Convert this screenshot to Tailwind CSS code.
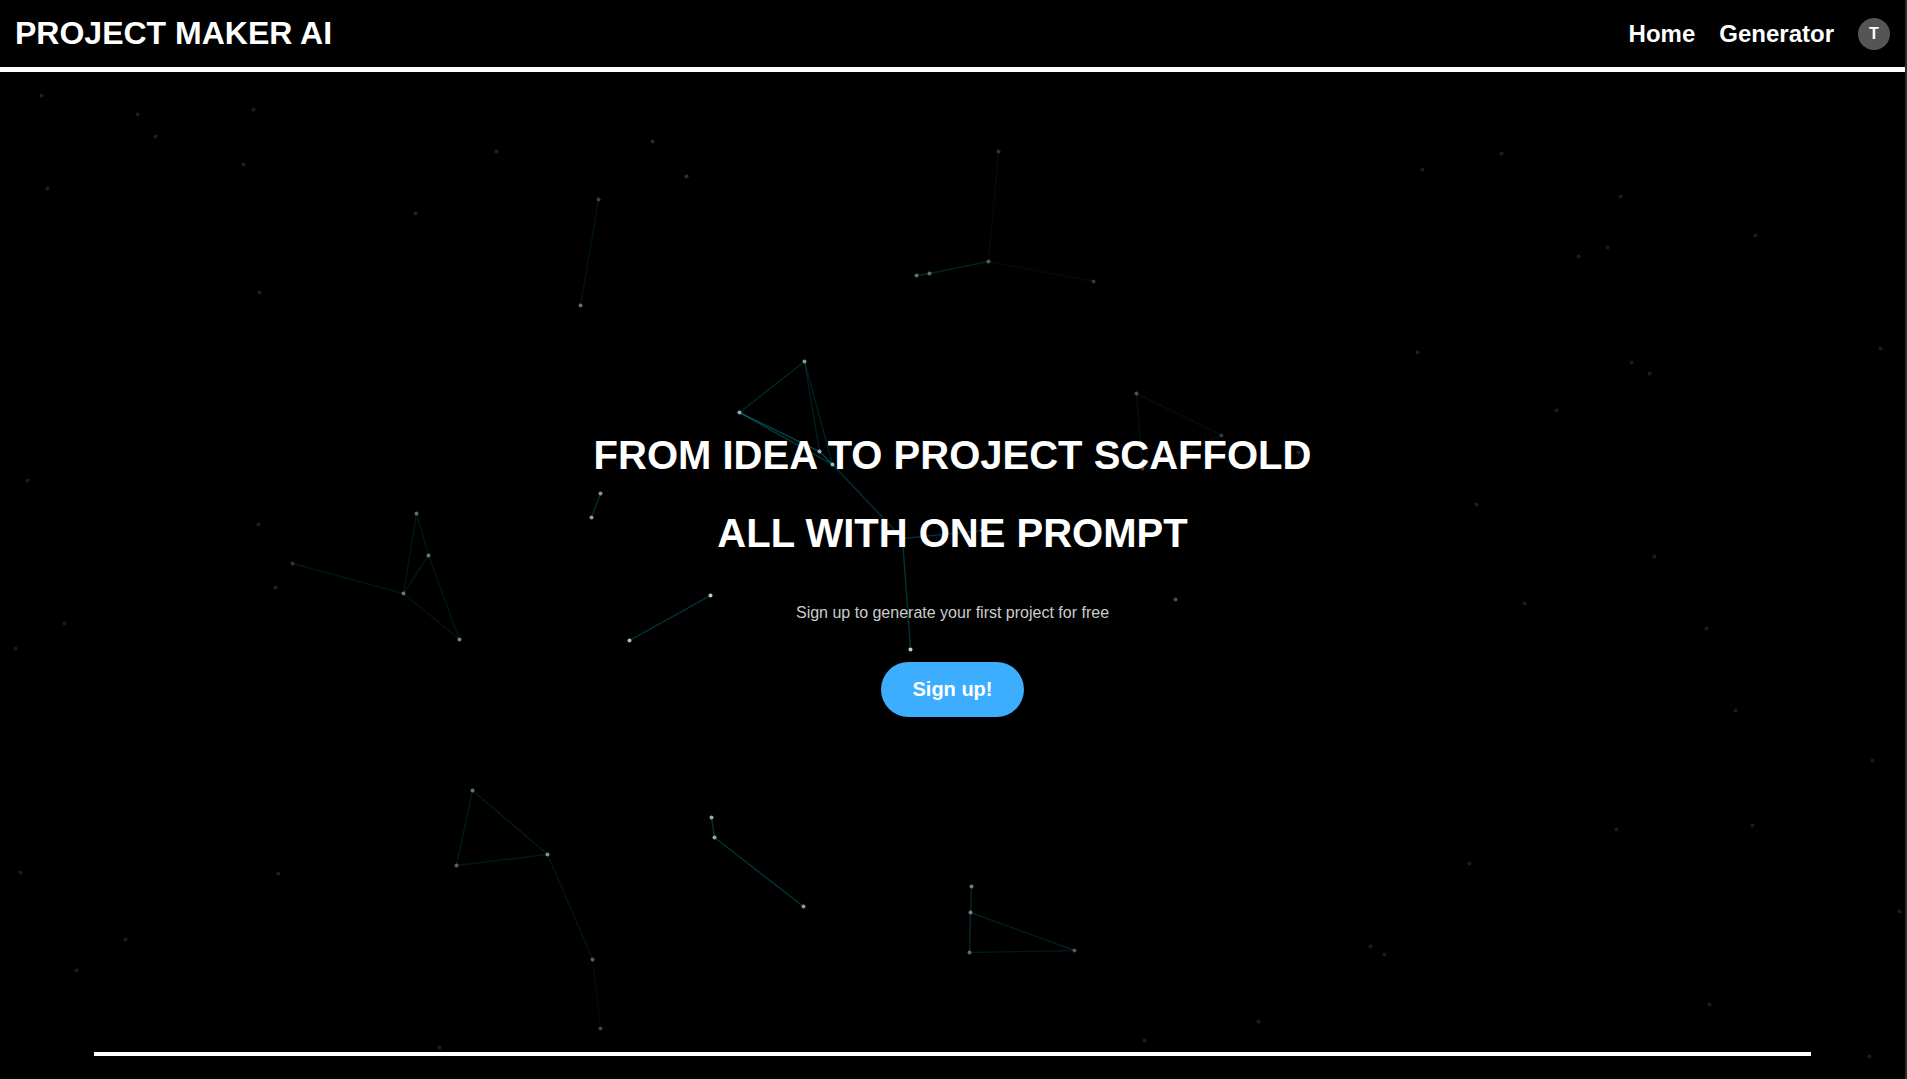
<!DOCTYPE html>
<html lang="en">
<head>
<meta charset="utf-8">
<title>Project Maker AI</title>
<meta name="viewport" content="width=device-width, initial-scale=1">
<script src="https://cdn.jsdelivr.net/npm/@tailwindcss/browser@4"></script>
</head>
<body class="bg-black">
<div class="relative flex min-h-screen flex-col overflow-hidden border-r-2 border-[#2c2c2c] bg-black font-['Liberation_Sans',Arial,sans-serif] text-white">

  <!-- Particle network backdrop -->
  <svg class="absolute inset-0 h-full w-full" viewBox="0 0 1905 1079" preserveAspectRatio="xMidYMid slice" aria-hidden="true">
    <g transform="translate(0.5 0.5)">
      <g id="dots"></g>
      <g id="links" stroke="#00f0ff" stroke-width="1.4"></g>
    </g>
  </svg>

  <header class="relative flex h-[72px] items-center justify-between border-b-5 border-white bg-black px-[15px]">
    <a href="#" class="pb-0.5 text-[32px] leading-9 font-bold">PROJECT MAKER AI</a>
    <nav class="flex items-center gap-6 pt-px text-2xl leading-8 font-bold">
      <a href="#">Home</a>
      <a href="#">Generator</a>
      <button class="flex size-8 items-center justify-center rounded-full bg-[#555555] text-base font-bold" aria-label="Account">T</button>
    </nav>
  </header>

  <main class="relative flex flex-1 flex-col items-center justify-center pt-[9px] text-center">
    <h1 class="text-[40px] leading-[78px] font-bold">FROM IDEA TO PROJECT SCAFFOLD<br>ALL WITH ONE PROMPT</h1>
    <p class="mt-[29px] text-base leading-6 text-[#cccccc]">Sign up to generate your first project for free</p>
    <button class="mt-[37px] h-[55px] rounded-full bg-[#3dadff] px-8 pb-0.5 text-xl font-bold">Sign up!</button>
  </main>

  <hr class="relative mx-auto mb-[23px] h-1 w-[calc(90%+2px)] border-0 bg-white">
</div>

<script>
  // x, y, grey level
  const dots = [
    [41,95,30],[137,114,30],[155,136,30],[253,109,30],[243,164,30],[496,151,34],[47,188,30],[415,213,34],[259,292,32],
    [598,199,60],[580,305,105],[652,141,42],[686,176,48],[998,151,48],[988,261,85],[929,273,100],[916,275,105],[1093,281,55],
    [804,361,145],[739,412,165],[819,451,175],[832,464,180],[600,493,145],[591,517,150],[710,595,200],[629,640,185],[910,649,205],
    [902,538,200],[982,530,150],[1136,393,75],[1221,435,50],[1142,468,60],[1298,452,34],[1175,599,75],
    [416,513,100],[428,555,110],[403,593,110],[459,639,125],[292,563,48],[275,587,34],[258,524,30],
    [472,790,110],[547,854,135],[456,865,90],[592,959,90],[600,1028,65],[711,817,165],[714,837,165],[803,906,150],[439,1047,30],
    [971,886,120],[970,912,120],[969,952,100],[1074,950,80],[1144,1040,30],[1258,1021,30],
    [1501,153,28],[1422,169,28],[1620,196,28],[1755,235,28],[1607,247,28],[1578,256,28],[1417,352,30],[1631,362,28],[1649,373,28],
    [1880,348,28],[1556,410,28],[1476,504,30],[1654,556,28],[1524,603,28],[1706,628,28],[1735,710,28],[1872,760,28],[1616,829,28],
    [1752,825,28],[1469,863,28],[1899,911,28],[1370,946,28],[1384,954,28],[1709,1004,28],[1869,1056,28],
    [27,480,28],[15,648,28],[64,623,28],[20,872,28],[278,873,32],[125,939,28],[76,970,28]
  ];
  // x1, y1, x2, y2, opacity
  const links = [
    [598,199,580,305,.08],[598,199,686,176,.015],[652,141,686,176,.01],
    [998,151,988,261,.05],[988,261,929,273,.14],[929,273,916,275,.18],[988,261,1093,281,.05],
    [804,361,739,412,.16],[804,361,819,451,.13],[804,361,832,464,.13],[739,412,819,451,.28],[739,412,832,464,.24],
    [819,451,832,464,.28],[832,464,902,538,.2],[902,538,982,530,.2],[902,538,910,649,.22],
    [600,493,591,517,.18],[710,595,629,640,.24],
    [1136,393,1221,435,.06],[1136,393,1142,468,.07],[1221,435,1142,468,.06],
    [416,513,428,555,.09],[416,513,403,593,.09],[428,555,403,593,.1],[428,555,459,639,.09],[403,593,459,639,.09],[292,563,403,593,.09],
    [472,790,547,854,.11],[472,790,456,865,.1],[456,865,547,854,.1],[547,854,592,959,.09],[592,959,600,1028,.05],
    [711,817,714,837,.22],[714,837,803,906,.22],
    [971,886,970,912,.18],[970,912,969,952,.18],[970,912,1074,950,.13],[969,952,1074,950,.1]
  ];
  const add = (parent, name, attrs) => {
    const el = document.createElementNS('http://www.w3.org/2000/svg', name);
    for (const key in attrs) el.setAttribute(key, attrs[key]);
    document.getElementById(parent).append(el);
  };
  links.forEach(([x1, y1, x2, y2, o]) => add('links', 'line', { x1, y1, x2, y2, 'stroke-opacity': o }));
  dots.forEach(([cx, cy, g]) => add('dots', 'circle', { cx, cy, r: 2, fill: `rgb(${g},${g},${g})` }));
</script>
</body>
</html>
